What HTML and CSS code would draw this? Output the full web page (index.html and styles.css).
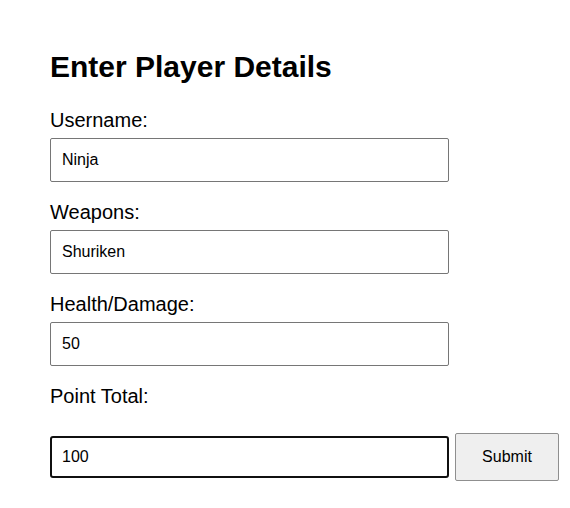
FILE: index.html
```html
<!DOCTYPE html>
<html lang="en">
<head>
<meta charset="utf-8">
<title>Enter Player Details</title>
<link rel="stylesheet" href="styles.css">
</head>
<body>
<form class="player-form">
  <h1 class="title">Enter Player Details</h1>
  <label class="field-label" for="username">Username:</label>
  <input class="field-input" id="username" type="text" value="Ninja">
  <label class="field-label" for="weapons">Weapons:</label>
  <input class="field-input" id="weapons" type="text" value="Shuriken">
  <label class="field-label" for="health">Health/Damage:</label>
  <input class="field-input" id="health" type="text" value="50">
  <label class="field-label" for="points">Point Total:</label>
  <div class="submit-row">
    <input class="field-input field-input--focused" id="points" type="text" value="100">
    <button class="submit-btn" type="button">Submit</button>
  </div>
</form>
</body>
</html>
```
FILE: styles.css
```css
html, body {
  margin: 0;
  padding: 0;
  background: #ffffff;
}

body {
  font-family: "Liberation Sans", Arial, sans-serif;
  color: #000000;
}

.player-form {
  padding: 50px 0 0 50px;
  display: flex;
  flex-direction: column;
  align-items: flex-start;
}

.title {
  margin: 0 0 24px;
  font-size: 30px;
  line-height: 34px;
  font-weight: bold;
}

.field-label {
  display: block;
  font-size: 20px;
  line-height: 23px;
  padding-top: 1px;
  margin-bottom: 6px;
}

.field-input {
  display: block;
  box-sizing: border-box;
  width: 399px;
  height: 44px;
  margin: 0 0 18px;
  padding: 0 11px;
  border: 1px solid #767676;
  border-radius: 2px;
  background: #ffffff;
  font-family: "Liberation Sans", Arial, sans-serif;
  font-size: 16px;
  color: #000000;
  outline: none;
}

.submit-row {
  margin-top: 19px;
  display: flex;
  align-items: center;
  gap: 6px;
}

.field-input--focused {
  margin: 0;
  height: 42px;
  padding: 0 10px;
  border: 2px solid #101010;
  border-radius: 3px;
}

.submit-btn {
  box-sizing: border-box;
  width: 104px;
  height: 48px;
  border: 1px solid #8f8f8f;
  border-radius: 2px;
  background: #efefef;
  font-family: "Liberation Sans", Arial, sans-serif;
  font-size: 16px;
  color: #000000;
  padding: 0;
}
```
